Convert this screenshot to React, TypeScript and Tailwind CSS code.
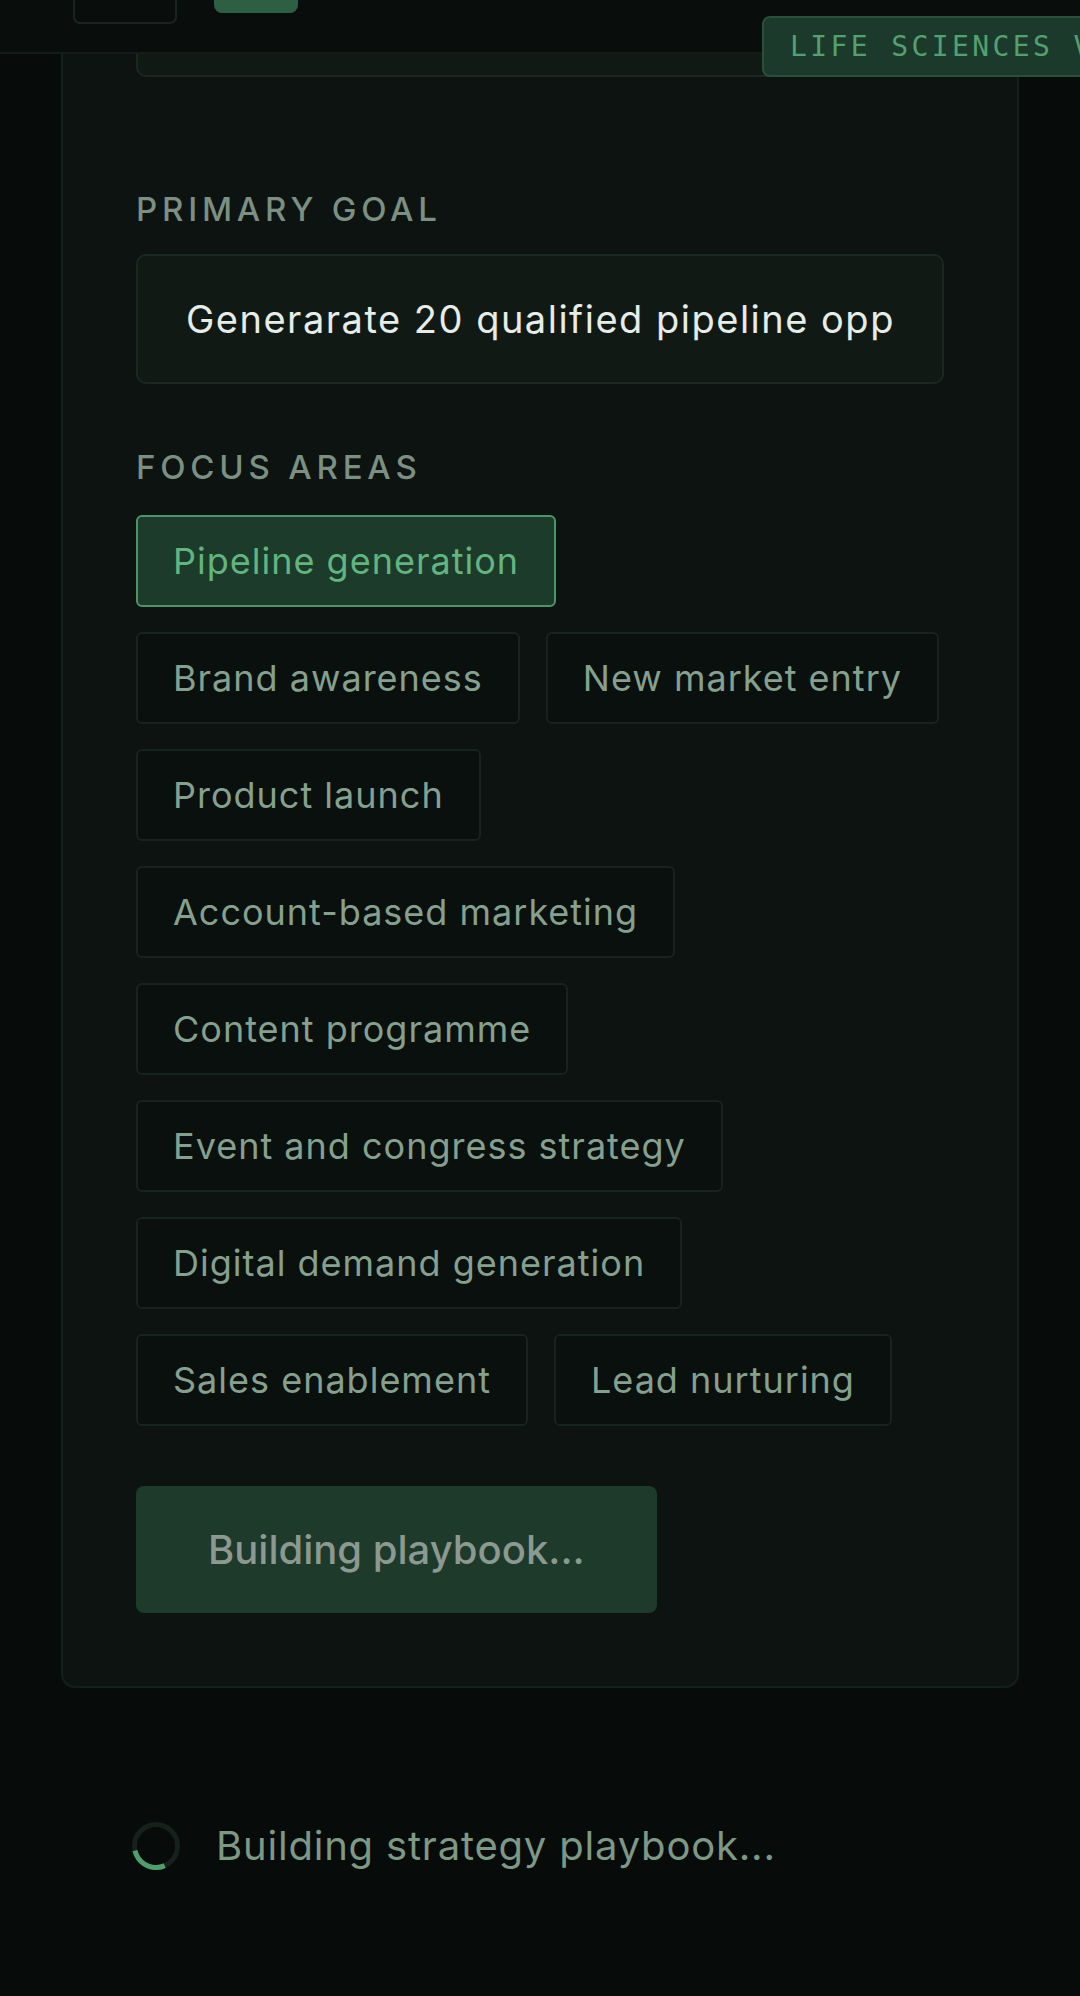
import React from "react";

const focusAreas = [
  { label: "Pipeline generation", active: true },
  { label: "Brand awareness", active: false },
  { label: "New market entry", active: false },
  { label: "Product launch", active: false },
  { label: "Account-based marketing", active: false },
  { label: "Content programme", active: false },
  { label: "Event and congress strategy", active: false },
  { label: "Digital demand generation", active: false },
  { label: "Sales enablement", active: false },
  { label: "Lead nurturing", active: false },
];

const Header = () => {
  return (
    <header className="absolute inset-x-0 top-0 z-10 flex h-[54px] items-start border-b-2 border-[#141c18] bg-[#090d0b] pl-[73px]">
      <div className="-mt-[30px] h-[54px] w-[104px] rounded-[7px] border-2 border-[#1a251f]" />
      <div className="-mt-[30px] ml-[37px] h-[43px] w-[84px] rounded-[8px] bg-[#2f5f43]" />
    </header>
  );
};

const Spinner = () => (
  <svg width="48" height="48" viewBox="0 0 48 48" className="shrink-0">
    <circle cx="24" cy="24" r="21.5" fill="none" stroke="#16211b" strokeWidth="5" />
    <circle
      cx="24"
      cy="24"
      r="21.5"
      fill="none"
      stroke="#4f9f6d"
      strokeWidth="5"
      strokeDasharray="38 135"
      transform="rotate(66 24 24)"
    />
  </svg>
);

export default function App() {
  return (
    <div className="relative h-[1996px] overflow-hidden bg-[#070b09] font-['Inter',sans-serif]">
      <Header />

      {/* vertical badge */}
      <div className="absolute left-[762px] top-[16px] z-20 flex h-[61px] items-center whitespace-nowrap rounded-l-[8px] border-2 border-[#2b4f3b] bg-[#1c3a2b] pl-[26px] font-['DejaVu_Sans_Mono',monospace] text-[28px] tracking-[3.4px] text-[#53a070]">
        LIFE SCIENCES VERTICAL
      </div>

      <main>
        <section className="mx-[61px] -mt-[128px] rounded-[14px] border-2 border-[#16201b] bg-[#0c1310] px-[73px] pt-[73px] pb-[73px]">
          <div className="h-[130px] rounded-[10px] border-2 border-[#1c2722] bg-[#111915]" />

          <p className="mt-[112px] text-[33px] leading-[40px] font-medium tracking-[4.8px] text-[#7b8f82]">
            PRIMARY GOAL
          </p>
          <input
            readOnly
            value="Generarate 20 qualified pipeline opportunities in Q3"
            className="mt-[25px] block h-[130px] w-full rounded-[10px] border-2 border-[#1c2722] bg-[#111915] px-[48px] text-[38px] tracking-[1.5px] text-[#e6ece8] outline-none"
          />

          <p className="mt-[63px] text-[33px] leading-[40px] font-medium tracking-[4.8px] text-[#7b8f82]">
            FOCUS AREAS
          </p>
          <div className="mt-[28px] flex flex-wrap gap-x-[26px] gap-y-[25px]">
            {focusAreas.map((area) => (
              <button
                key={area.label}
                className={
                  area.active
                    ? "flex h-[92px] items-center rounded-[6px] border-2 border-[#4b9568] bg-[#1c3b2b] px-[35px] text-[36px] tracking-[1px] text-[#62b57f]"
                    : "flex h-[92px] items-center rounded-[6px] border-2 border-[#18231d] bg-[#0a100d] px-[35px] text-[36px] tracking-[1px] text-[#86a08f]"
                }
              >
                {area.label}
              </button>
            ))}
          </div>

          <button className="mt-[60px] flex h-[127px] items-center rounded-[8px] bg-[#1d3a2b] px-[72px] text-[40px] font-medium text-[#8b9990]">
            Building playbook...
          </button>
        </section>

        <div className="mt-[128px] flex items-center gap-[36px] pl-[132px]">
          <Spinner />
          <span className="text-[40px] tracking-[0.8px] text-[#7e9886]">Building strategy playbook...</span>
        </div>
      </main>
    </div>
  );
}
